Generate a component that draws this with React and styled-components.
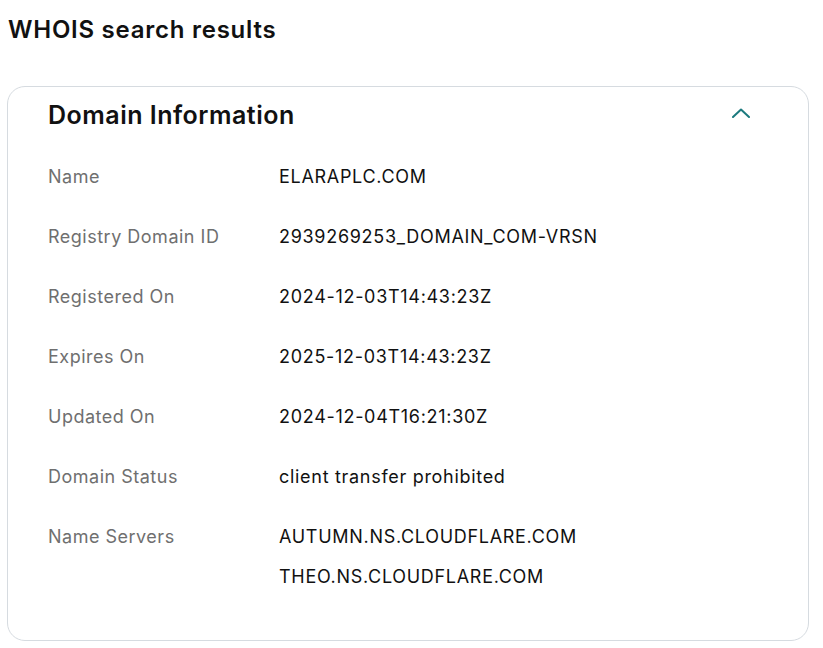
import React from "react";
import styled, { createGlobalStyle } from "styled-components";

const Global = createGlobalStyle`
  html, body { margin: 0; padding: 0; background: #fff; }
  body { font-family: Inter, "Noto Sans", "Liberation Sans", sans-serif; color: #111; }
`;

const Page = styled.div`
  padding: 12px 15px 0 7px;
  width: 823px;
  box-sizing: border-box;
`;

const Title = styled.h1`
  margin: 0 0 0 1px;
  font-size: 24px;
  line-height: 35px;
  font-weight: 600;
  letter-spacing: 0.75px;
  color: #111;
`;

const Card = styled.section`
  margin-top: 39px;
  width: 802px;
  box-sizing: border-box;
  border: 1px solid #d6dbe0;
  border-radius: 18px;
  padding: 12px 40px 33px 40px;
`;

const Header = styled.div`
  display: flex;
  align-items: center;
  justify-content: space-between;
`;

const Heading = styled.h2`
  margin: 0;
  font-size: 25px;
  line-height: 32px;
  font-weight: 600;
  letter-spacing: 0.5px;
  color: #111;
`;

const Toggle = styled.button`
  border: 0;
  background: none;
  padding: 0;
  margin: 0 15px 4px 0;
  width: 24px;
  height: 24px;
  display: flex;
  align-items: center;
  justify-content: center;
  color: #1c7a7e;
  cursor: pointer;
`;

const List = styled.dl`
  margin: 16px 0 0 0;
  display: grid;
  grid-template-columns: 231px 1fr;
`;

const Label = styled.dt`
  padding: 18px 0;
  font-size: 18px;
  line-height: 24px;
  letter-spacing: 0.5px;
  color: #6f6f6f;
`;

const Value = styled.dd`
  margin: 0;
  padding: 18px 0;
  font-size: 18px;
  line-height: 24px;
  letter-spacing: 0.7px;
  color: #111;
  display: flex;
  flex-direction: column;
  gap: 16px;
`;

const rows = [
  ["Name", ["ELARAPLC.COM"]],
  ["Registry Domain ID", ["2939269253_DOMAIN_COM-VRSN"]],
  ["Registered On", ["2024-12-03T14:43:23Z"]],
  ["Expires On", ["2025-12-03T14:43:23Z"]],
  ["Updated On", ["2024-12-04T16:21:30Z"]],
  ["Domain Status", ["client transfer prohibited"]],
  ["Name Servers", ["AUTUMN.NS.CLOUDFLARE.COM", "THEO.NS.CLOUDFLARE.COM"]],
];

export default function App() {
  return (
    <Page>
      <Global />
      <Title>WHOIS search results</Title>
      <Card>
        <Header>
          <Heading>Domain Information</Heading>
          <Toggle aria-label="Collapse">
            <svg width="18" height="10" viewBox="0 0 18 10" fill="none">
              <path d="M1 9 L9 1.5 L17 9" stroke="currentColor" strokeWidth="2" strokeLinecap="round" strokeLinejoin="round" />
            </svg>
          </Toggle>
        </Header>
        <List>
          {rows.map(([label, values]) => (
            <React.Fragment key={label}>
              <Label>{label}</Label>
              <Value>
                {values.map((v) => (
                  <span key={v}>{v}</span>
                ))}
              </Value>
            </React.Fragment>
          ))}
        </List>
      </Card>
    </Page>
  );
}
